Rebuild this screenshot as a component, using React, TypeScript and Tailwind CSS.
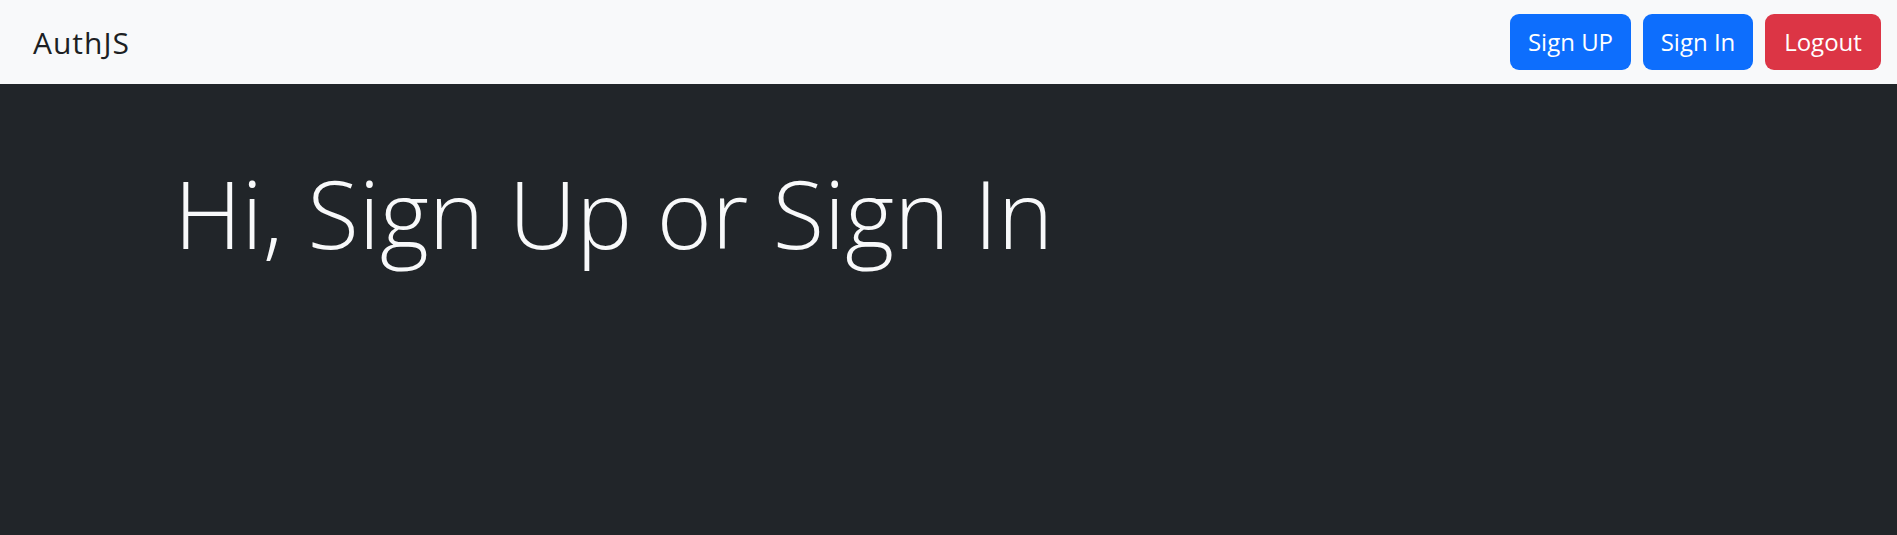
const NavButton = ({ label, color, width }: { label: string; color: string; width: string }) => (
	<button
		type="button"
		className={`${color} ${width} h-[56px] rounded-[9px] text-[24px] leading-[36px] text-white text-center`}
	>
		{label}
	</button>
);

const App = () => {
	return (
		<div className="w-full min-h-[535px] bg-[#212529] font-['Open_Sans',sans-serif]">
			<nav className="h-[84px] bg-[#f8f9fa] flex items-center justify-between pl-[33px] pr-[16px]">
				<span className="text-[30px] leading-[45px] tracking-[1px] text-[#1c1f23]">AuthJS</span>
				<div className="flex items-center gap-[12px]">
					<NavButton label="Sign UP" color="bg-[#0d6efd]" width="w-[121px]" />
					<NavButton label="Sign In" color="bg-[#0d6efd]" width="w-[110px]" />
					<NavButton label="Logout" color="bg-[#dc3545]" width="w-[116px]" />
				</div>
			</nav>

			<main className="pt-[72px] pl-[174px]">
				<h1 className="text-[94px] leading-[115px] font-light text-[#f8f9fa]">Hi, Sign Up or Sign In</h1>
			</main>
		</div>
	);
};

export default App;
